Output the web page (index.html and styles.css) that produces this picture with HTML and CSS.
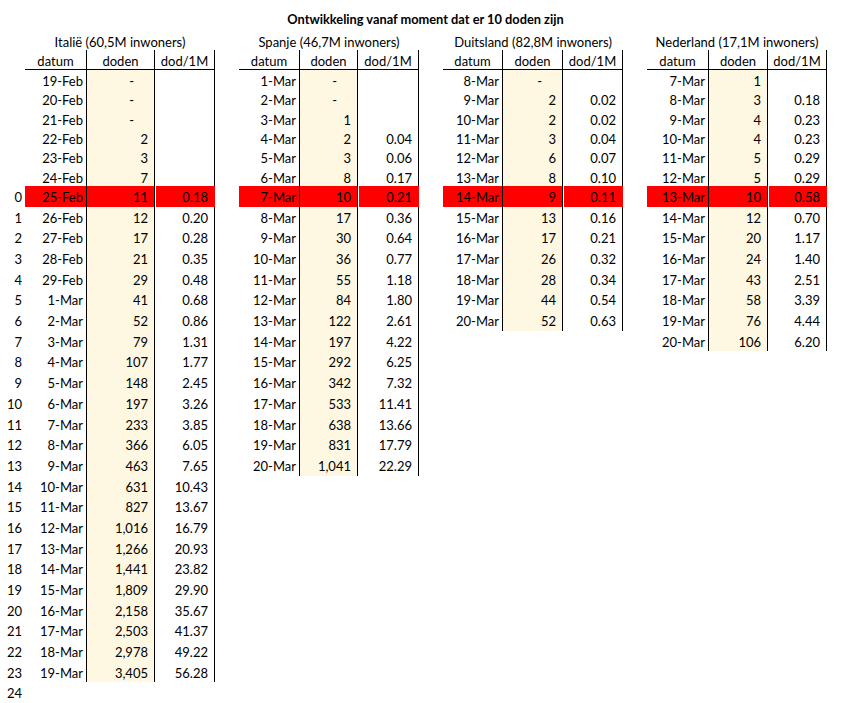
FILE: index.html
```html
<!DOCTYPE html>
<html lang="nl">
<head>
<meta charset="utf-8">
<title>Ontwikkeling vanaf moment dat er 10 doden zijn</title>
<link rel="stylesheet" href="styles.css">
</head>
<body>
<div class="sheet">
  <div class="title">Ontwikkeling vanaf moment dat er 10 doden zijn</div>
  <div class="blocks">
    <div class="grid idx">
      <div></div><div></div>
      <div></div><div></div><div></div><div></div><div></div><div></div>
      <div class="ix">0</div><div class="ix">1</div><div class="ix">2</div><div class="ix">3</div><div class="ix">4</div>
      <div class="ix">5</div><div class="ix">6</div><div class="ix">7</div><div class="ix">8</div><div class="ix">9</div>
      <div class="ix">10</div><div class="ix">11</div><div class="ix">12</div><div class="ix">13</div><div class="ix">14</div>
      <div class="ix">15</div><div class="ix">16</div><div class="ix">17</div><div class="ix">18</div><div class="ix">19</div>
      <div class="ix">20</div><div class="ix">21</div><div class="ix">22</div><div class="ix">23</div><div class="ix">24</div>
    </div>
    <div class="countries">
      <div class="grid it">
        <div class="country">Italië (60,5M inwoners)</div>
        <div class="h">datum</div><div class="h">doden</div><div class="h">dod/1M</div>
        <div class="d">19-Feb</div><div class="n dn dash">-</div><div class="n"></div>
        <div class="d">20-Feb</div><div class="n dn dash">-</div><div class="n"></div>
        <div class="d">21-Feb</div><div class="n dn dash">-</div><div class="n"></div>
        <div class="d">22-Feb</div><div class="n dn">2</div><div class="n"></div>
        <div class="d">23-Feb</div><div class="n dn">3</div><div class="n"></div>
        <div class="d">24-Feb</div><div class="n dn">7</div><div class="n"></div>
        <div class="d r">25-Feb</div><div class="n r">11</div><div class="n r m">0.18</div>
        <div class="d">26-Feb</div><div class="n dn">12</div><div class="n">0.20</div>
        <div class="d">27-Feb</div><div class="n dn">17</div><div class="n">0.28</div>
        <div class="d">28-Feb</div><div class="n dn">21</div><div class="n">0.35</div>
        <div class="d">29-Feb</div><div class="n dn">29</div><div class="n">0.48</div>
        <div class="d">1-Mar</div><div class="n dn">41</div><div class="n">0.68</div>
        <div class="d">2-Mar</div><div class="n dn">52</div><div class="n">0.86</div>
        <div class="d">3-Mar</div><div class="n dn">79</div><div class="n">1.31</div>
        <div class="d">4-Mar</div><div class="n dn">107</div><div class="n">1.77</div>
        <div class="d">5-Mar</div><div class="n dn">148</div><div class="n">2.45</div>
        <div class="d">6-Mar</div><div class="n dn">197</div><div class="n">3.26</div>
        <div class="d">7-Mar</div><div class="n dn">233</div><div class="n">3.85</div>
        <div class="d">8-Mar</div><div class="n dn">366</div><div class="n">6.05</div>
        <div class="d">9-Mar</div><div class="n dn">463</div><div class="n">7.65</div>
        <div class="d">10-Mar</div><div class="n dn">631</div><div class="n">10.43</div>
        <div class="d">11-Mar</div><div class="n dn">827</div><div class="n">13.67</div>
        <div class="d">12-Mar</div><div class="n dn">1,016</div><div class="n">16.79</div>
        <div class="d">13-Mar</div><div class="n dn">1,266</div><div class="n">20.93</div>
        <div class="d">14-Mar</div><div class="n dn">1,441</div><div class="n">23.82</div>
        <div class="d">15-Mar</div><div class="n dn">1,809</div><div class="n">29.90</div>
        <div class="d">16-Mar</div><div class="n dn">2,158</div><div class="n">35.67</div>
        <div class="d">17-Mar</div><div class="n dn">2,503</div><div class="n">41.37</div>
        <div class="d">18-Mar</div><div class="n dn">2,978</div><div class="n">49.22</div>
        <div class="d">19-Mar</div><div class="n dn">3,405</div><div class="n">56.28</div>
      </div>
      <div class="grid es">
        <div class="country">Spanje (46,7M inwoners)</div>
        <div class="h">datum</div><div class="h">doden</div><div class="h">dod/1M</div>
        <div class="d">1-Mar</div><div class="n dn dash">-</div><div class="n"></div>
        <div class="d">2-Mar</div><div class="n dn dash">-</div><div class="n"></div>
        <div class="d">3-Mar</div><div class="n dn">1</div><div class="n"></div>
        <div class="d">4-Mar</div><div class="n dn">2</div><div class="n">0.04</div>
        <div class="d">5-Mar</div><div class="n dn">3</div><div class="n">0.06</div>
        <div class="d">6-Mar</div><div class="n dn">8</div><div class="n">0.17</div>
        <div class="d r">7-Mar</div><div class="n r">10</div><div class="n r m">0.21</div>
        <div class="d">8-Mar</div><div class="n dn">17</div><div class="n">0.36</div>
        <div class="d">9-Mar</div><div class="n dn">30</div><div class="n">0.64</div>
        <div class="d">10-Mar</div><div class="n dn">36</div><div class="n">0.77</div>
        <div class="d">11-Mar</div><div class="n dn">55</div><div class="n">1.18</div>
        <div class="d">12-Mar</div><div class="n dn">84</div><div class="n">1.80</div>
        <div class="d">13-Mar</div><div class="n dn">122</div><div class="n">2.61</div>
        <div class="d">14-Mar</div><div class="n dn">197</div><div class="n">4.22</div>
        <div class="d">15-Mar</div><div class="n dn">292</div><div class="n">6.25</div>
        <div class="d">16-Mar</div><div class="n dn">342</div><div class="n">7.32</div>
        <div class="d">17-Mar</div><div class="n dn">533</div><div class="n">11.41</div>
        <div class="d">18-Mar</div><div class="n dn">638</div><div class="n">13.66</div>
        <div class="d">19-Mar</div><div class="n dn">831</div><div class="n">17.79</div>
        <div class="d">20-Mar</div><div class="n dn">1,041</div><div class="n">22.29</div>
      </div>
      <div class="grid de">
        <div class="country">Duitsland (82,8M inwoners)</div>
        <div class="h">datum</div><div class="h">doden</div><div class="h">dod/1M</div>
        <div class="d">8-Mar</div><div class="n dn dash">-</div><div class="n"></div>
        <div class="d">9-Mar</div><div class="n dn">2</div><div class="n">0.02</div>
        <div class="d">10-Mar</div><div class="n dn">2</div><div class="n">0.02</div>
        <div class="d">11-Mar</div><div class="n dn">3</div><div class="n">0.04</div>
        <div class="d">12-Mar</div><div class="n dn">6</div><div class="n">0.07</div>
        <div class="d">13-Mar</div><div class="n dn">8</div><div class="n">0.10</div>
        <div class="d r">14-Mar</div><div class="n r">9</div><div class="n r m">0.11</div>
        <div class="d">15-Mar</div><div class="n dn">13</div><div class="n">0.16</div>
        <div class="d">16-Mar</div><div class="n dn">17</div><div class="n">0.21</div>
        <div class="d">17-Mar</div><div class="n dn">26</div><div class="n">0.32</div>
        <div class="d">18-Mar</div><div class="n dn">28</div><div class="n">0.34</div>
        <div class="d">19-Mar</div><div class="n dn">44</div><div class="n">0.54</div>
        <div class="d">20-Mar</div><div class="n dn">52</div><div class="n">0.63</div>
      </div>
      <div class="grid nl">
        <div class="country">Nederland (17,1M inwoners)</div>
        <div class="h">datum</div><div class="h">doden</div><div class="h">dod/1M</div>
        <div class="d">7-Mar</div><div class="n dn">1</div><div class="n"></div>
        <div class="d">8-Mar</div><div class="n dn">3</div><div class="n">0.18</div>
        <div class="d">9-Mar</div><div class="n dn">4</div><div class="n">0.23</div>
        <div class="d">10-Mar</div><div class="n dn">4</div><div class="n">0.23</div>
        <div class="d">11-Mar</div><div class="n dn">5</div><div class="n">0.29</div>
        <div class="d">12-Mar</div><div class="n dn">5</div><div class="n">0.29</div>
        <div class="d r">13-Mar</div><div class="n r">10</div><div class="n r m">0.58</div>
        <div class="d">14-Mar</div><div class="n dn">12</div><div class="n">0.70</div>
        <div class="d">15-Mar</div><div class="n dn">20</div><div class="n">1.17</div>
        <div class="d">16-Mar</div><div class="n dn">24</div><div class="n">1.40</div>
        <div class="d">17-Mar</div><div class="n dn">43</div><div class="n">2.51</div>
        <div class="d">18-Mar</div><div class="n dn">58</div><div class="n">3.39</div>
        <div class="d">19-Mar</div><div class="n dn">76</div><div class="n">4.44</div>
        <div class="d">20-Mar</div><div class="n dn">106</div><div class="n">6.20</div>
      </div>
    </div>
  </div>
</div>
</body>
</html>
```
FILE: styles.css
```css
html, body {
  margin: 0;
  padding: 0;
  background: #ffffff;
}

.sheet {
  font-family: Lato, "Open Sans", sans-serif;
  font-size: 13px;
  color: #000000;
  width: 846px;
}

.title {
  height: 30px;
  box-sizing: border-box;
  padding: 9px 0 0 5px;
  line-height: 20px;
  text-align: center;
  font-weight: 700;
  font-size: 12.8px;
}

.blocks {
  display: flex;
}

.countries {
  display: flex;
  gap: 24px;
}

.grid {
  display: grid;
  grid-template-rows: 20px 20px repeat(6, 19.33px) repeat(25, 20.7px);
  align-content: start;
}

.grid > div {
  box-sizing: border-box;
  line-height: 20px;
  padding-top: 1px;
  white-space: nowrap;
}

.idx { grid-template-columns: 25px; }
.it { grid-template-columns: 62px 68px 60px; }
.es { grid-template-columns: 61px 58px 61px; }
.de { grid-template-columns: 60px 60px 60px; }
.nl { grid-template-columns: 62px 59px 59px; }

.ix {
  text-align: right;
  padding-right: 3px;
}

.grid > .country {
  grid-column: 1 / -1;
  text-align: center;
  padding-top: 2px;
}

.grid > .h {
  text-align: center;
  border-right: 1px solid #000;
  border-bottom: 1px solid #000;
  padding-top: 1px;
}

.d {
  text-align: right;
  padding-right: 3px;
  border-right: 1px solid #000;
}

.n {
  text-align: right;
  padding-right: 6px;
  border-right: 1px solid #000;
}

.dn {
  background: #fef7e2;
}

.n.dash {
  padding-right: 20px;
}

.r {
  background: #ff0000;
}

.n.m {
  border-right-color: #ff0000;
  box-shadow: inset 1px 0 0 #ffffff;
}
```
